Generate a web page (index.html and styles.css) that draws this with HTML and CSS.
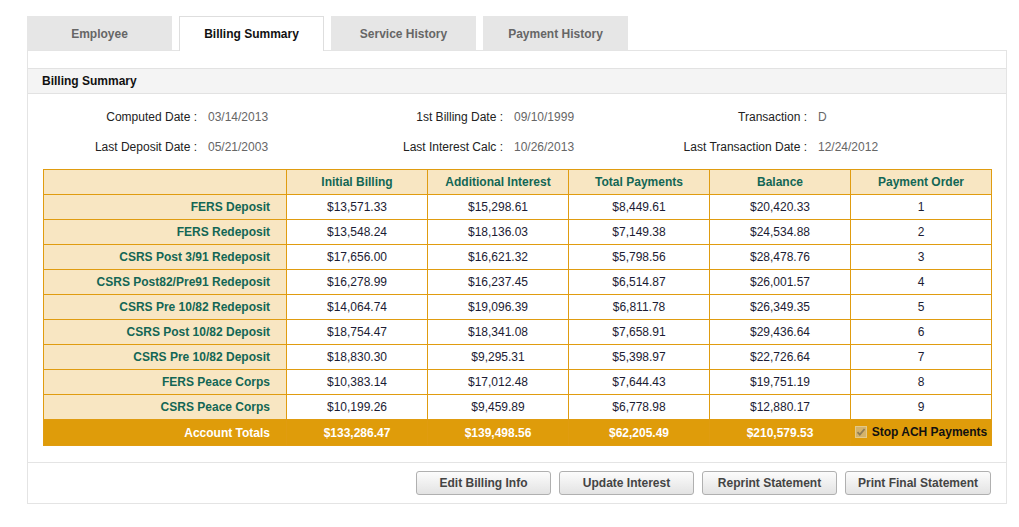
FILE: index.html
```html
<!DOCTYPE html>
<html>
<head>
<meta charset="utf-8">
<title>Billing Summary</title>
<link rel="stylesheet" href="styles.css">
</head>
<body>
<div class="page">
  <div class="tabs">
    <div class="tab">Employee</div>
    <div class="tab tab-active">Billing Summary</div>
    <div class="tab">Service History</div>
    <div class="tab">Payment History</div>
  </div>
  <div class="panel">
    <div class="section-head">Billing Summary</div>
    <div class="info">
      <div class="info-label">Computed Date :</div><div class="info-value">03/14/2013</div>
      <div class="info-label">1st Billing Date :</div><div class="info-value">09/10/1999</div>
      <div class="info-label">Transaction :</div><div class="info-value">D</div>
      <div class="info-label">Last Deposit Date :</div><div class="info-value">05/21/2003</div>
      <div class="info-label">Last Interest Calc :</div><div class="info-value">10/26/2013</div>
      <div class="info-label">Last Transaction Date :</div><div class="info-value">12/24/2012</div>
    </div>
    <table class="billing">
      <colgroup>
        <col class="col-label"><col class="col-num"><col class="col-num"><col class="col-num"><col class="col-num"><col class="col-num">
      </colgroup>
      <thead>
        <tr><th></th><th>Initial Billing</th><th>Additional Interest</th><th>Total Payments</th><th>Balance</th><th>Payment Order</th></tr>
      </thead>
      <tbody>
        <tr><td class="row-label">FERS Deposit</td><td>$13,571.33</td><td>$15,298.61</td><td>$8,449.61</td><td>$20,420.33</td><td>1</td></tr>
        <tr><td class="row-label">FERS Redeposit</td><td>$13,548.24</td><td>$18,136.03</td><td>$7,149.38</td><td>$24,534.88</td><td>2</td></tr>
        <tr><td class="row-label">CSRS Post 3/91 Redeposit</td><td>$17,656.00</td><td>$16,621.32</td><td>$5,798.56</td><td>$28,478.76</td><td>3</td></tr>
        <tr><td class="row-label">CSRS Post82/Pre91 Redeposit</td><td>$16,278.99</td><td>$16,237.45</td><td>$6,514.87</td><td>$26,001.57</td><td>4</td></tr>
        <tr><td class="row-label">CSRS Pre 10/82 Redeposit</td><td>$14,064.74</td><td>$19,096.39</td><td>$6,811.78</td><td>$26,349.35</td><td>5</td></tr>
        <tr><td class="row-label">CSRS Post 10/82 Deposit</td><td>$18,754.47</td><td>$18,341.08</td><td>$7,658.91</td><td>$29,436.64</td><td>6</td></tr>
        <tr><td class="row-label">CSRS Pre 10/82 Deposit</td><td>$18,830.30</td><td>$9,295.31</td><td>$5,398.97</td><td>$22,726.64</td><td>7</td></tr>
        <tr><td class="row-label">FERS Peace Corps</td><td>$10,383.14</td><td>$17,012.48</td><td>$7,644.43</td><td>$19,751.19</td><td>8</td></tr>
        <tr><td class="row-label">CSRS Peace Corps</td><td>$10,199.26</td><td>$9,459.89</td><td>$6,778.98</td><td>$12,880.17</td><td>9</td></tr>
        <tr class="totals">
          <td class="row-label">Account Totals</td><td>$133,286.47</td><td>$139,498.56</td><td>$62,205.49</td><td>$210,579.53</td>
          <td class="stop-cell"><span class="stop"><span class="check"><svg width="10" height="10" viewBox="0 0 10 10"><path d="M1.5 5.2 L3.8 7.6 L8.6 2" fill="none" stroke="#8f7d55" stroke-width="1.8"/></svg></span>Stop ACH Payments</span></td>
        </tr>
      </tbody>
    </table>
    <div class="actions">
      <button class="btn">Edit Billing Info</button>
      <button class="btn">Update Interest</button>
      <button class="btn">Reprint Statement</button>
      <button class="btn btn-wide">Print Final Statement</button>
    </div>
  </div>
</div>
</body>
</html>
```

FILE: styles.css
```css
body {
  margin: 0;
  background: #ffffff;
  font-family: "Liberation Sans", Arial, sans-serif;
  font-size: 12px;
  color: #222222;
}

.page {
  padding: 16px 0 0 27px;
  width: 980px;
}

.tabs {
  display: flex;
  gap: 7px;
  height: 34px;
}

.tab {
  width: 145px;
  height: 34px;
  box-sizing: border-box;
  padding-top: 1px;
  display: flex;
  align-items: center;
  justify-content: center;
  background: #e6e6e6;
  color: #666666;
  font-weight: bold;
  font-size: 12px;
}

.tab-active {
  position: relative;
  z-index: 2;
  height: 35px;
  background: #ffffff;
  border: 1px solid #dedede;
  border-bottom: none;
  color: #111111;
  padding-top: 0;
  padding-bottom: 1px;
}

.panel {
  box-sizing: border-box;
  width: 980px;
  border: 1px solid #e4e4e4;
  padding-top: 17px;
}

.section-head {
  height: 24px;
  line-height: 24px;
  border-top: 1px solid #e2e2e2;
  border-bottom: 1px solid #e2e2e2;
  background: #f4f4f4;
  padding-left: 14px;
  font-weight: bold;
  color: #111111;
}

.info {
  display: grid;
  grid-template-columns: 169px 120px 186px 120px 184px 1fr;
  grid-auto-rows: 30px;
  align-items: center;
  padding-top: 8px;
}

.info-label {
  text-align: right;
  color: #222222;
  white-space: nowrap;
}

.info-value {
  padding-left: 11px;
  color: #666666;
}

.billing {
  margin: 7px 15px 0 15px;
  width: 948px;
  table-layout: fixed;
  border-collapse: collapse;
}

.col-label { width: 243px; }
.col-num { width: 141px; }

.billing th,
.billing td {
  border: 1px solid #e09c10;
  height: 24px;
  padding: 0;
  text-align: center;
  font-size: 12px;
  color: #1c1c34;
  white-space: nowrap;
}

.billing th {
  background: #f8e6c2;
  color: #136655;
  font-weight: bold;
}

.billing td.row-label {
  background: #f8e6c2;
  color: #136655;
  font-weight: bold;
  text-align: right;
  padding-right: 16px;
}

.billing tr.totals td {
  background: #df9c0a;
  color: #ffffff;
  font-weight: bold;
  height: 25px;
}

.billing tr.totals td.row-label {
  background: #df9c0a;
  color: #ffffff;
}

.billing tr.totals td.stop-cell {
  color: #111111;
}

.stop {
  display: inline-flex;
  align-items: center;
  gap: 5px;
}

.check {
  width: 12px;
  height: 12px;
  box-sizing: border-box;
  border: 1px solid #e3c98a;
  background: #d4b36a;
  display: inline-flex;
  align-items: center;
  justify-content: center;
}

.actions {
  margin-top: 16px;
  border-top: 1px solid #e4e4e4;
  padding: 8px 15px 8px 0;
  display: flex;
  justify-content: flex-end;
  gap: 8px;
}

.btn {
  width: 135px;
  height: 24px;
  padding: 0;
  border: 1px solid #b0b0b0;
  border-radius: 3px;
  background: linear-gradient(#fcfcfc, #e3e3e3);
  font-family: "Liberation Sans", Arial, sans-serif;
  font-size: 12px;
  font-weight: bold;
  color: #444444;
}

.btn-wide {
  width: 146px;
}
```
